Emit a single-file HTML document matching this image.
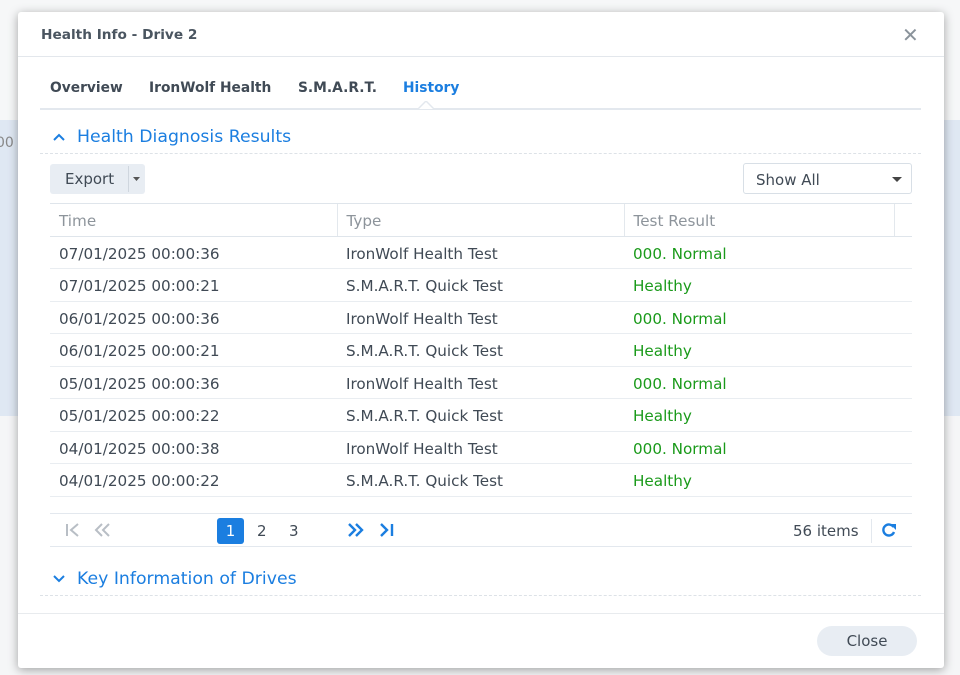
<!DOCTYPE html>
<html><head><meta charset="utf-8">
<style>
*{box-sizing:border-box;margin:0;padding:0}
body{width:960px;height:675px;overflow:hidden;background:#f4f5f7;font-family:"DejaVu Sans","Liberation Sans",sans-serif;position:relative;color:#404a55}
.bgtop{position:absolute;left:0;top:0;width:960px;height:120px;background:#f6f7f8}
.bgblue{position:absolute;left:0;top:120px;width:960px;height:296px;background:#dfe8f3}
.bgbot{position:absolute;left:0;top:416px;width:960px;height:259px;background:#f5f6f7}
.ghost{position:absolute;left:-4px;top:135px;font-size:14px;color:#888}
.dlg{position:absolute;left:18px;top:12px;width:926px;height:656px;background:#fff;border-radius:3px;box-shadow:0 2px 10px rgba(0,0,0,.35)}
.title{position:absolute;left:23px;top:15px;font-size:13.7px;font-weight:bold;color:#4a5560}
.x{position:absolute;left:884px;top:11px;font-size:20px;color:#8a939b;font-weight:bold}
.hline{position:absolute;left:0;top:44px;width:926px;height:1px;background:#e3e7ec}
.tabs{position:absolute;left:32px;top:68px;font-size:13.8px;font-weight:bold;color:#404a55}
.tabs span{position:absolute;white-space:nowrap}
.tabline{position:absolute;left:22px;top:96px;width:881px;height:1.5px;background:#e3e8ee}
.sec{position:absolute;font-size:17.3px;color:#1b7ee0;white-space:nowrap}
.dots{position:absolute;left:22px;width:881px;border-top:1px dashed #dde2e7}
.btn{position:absolute;left:32px;top:152px;width:95px;height:30px;background:#e8edf3;border-radius:3px;font-size:15px;color:#404a55}
.sel{position:absolute;left:725px;top:151px;width:169px;height:31px;border:1px solid #d8dfe6;border-radius:3px;font-size:15px;color:#404a55}
table{position:absolute;left:32px;top:191px;width:862px;border-collapse:collapse;font-size:15.2px}
td,th{height:32.5px;padding-left:9px;padding-top:3px;text-align:left;font-weight:normal;border-bottom:1px solid #e9edf1;white-space:nowrap}
th{color:#8d949b;border-top:1px solid #dfe5eb;border-bottom:1px solid #dfe5eb}
th+th{border-left:1px solid #e3e8ed}
.g{color:#1a9a1a}
.pager{position:absolute;left:32px;top:501px;width:862px;height:34px;border-top:1px solid #e3e8ee;border-bottom:1px solid #e3e8ee;font-size:15px}
.pager span{position:absolute;top:8px}
.foot{position:absolute;left:0;top:601px;width:926px;height:1px;background:#e8ebee}
.close{position:absolute;left:799px;top:614px;width:100px;height:30px;border-radius:15px;background:#e8edf3;font-size:15px;color:#404a55;text-align:center;line-height:30px}
</style></head><body>
<div class="bgtop"></div><div class="bgblue"></div><div class="bgbot"></div>
<div class="ghost">00</div>
<div class="dlg">
<div class="title">Health Info - Drive 2</div>
<div class="x">✕</div>
<div class="hline"></div>
<div class="tabs">
<span style="left:0">Overview</span>
<span style="left:99px">IronWolf Health</span>
<span style="left:248px">S.M.A.R.T.</span>
<span style="left:353px;color:#1b7ee0">History</span>
</div>
<div class="tabline"></div>
<svg style="position:absolute;left:400px;top:89px" width="16" height="9"><path d="M0 8 L8 0 L16 8" fill="#fff" stroke="#e3e8ee" stroke-width="1.5"/></svg>
<svg style="position:absolute;left:34px;top:120px" width="14" height="10"><path d="M2 8 L7 3 L12 8" fill="none" stroke="#1b7ee0" stroke-width="2"/></svg>
<div class="sec" style="left:59px;top:115px">Health Diagnosis Results</div>
<div class="dots" style="top:141px"></div>
<div class="btn"><span style="position:absolute;left:15px;top:6px">Export</span><span style="position:absolute;left:78px;top:2px;width:1px;height:26px;background:#cfd6de"></span><svg style="position:absolute;left:83px;top:13px" width="8" height="5"><path d="M0 0h7l-3.5 4z" fill="#555"/></svg></div>
<div class="sel"><span style="position:absolute;left:12px;top:7px">Show All</span><svg style="position:absolute;left:148px;top:13px" width="10" height="6"><path d="M0 0h10l-5 5z" fill="#444"/></svg></div>
<table>
<tr><th style="width:287px">Time</th><th style="width:287px">Type</th><th style="width:270px">Test Result</th><th></th></tr>
<tr><td>07/01/2025 00:00:36</td><td>IronWolf Health Test</td><td class="g" colspan="2">000. Normal</td></tr>
<tr><td>07/01/2025 00:00:21</td><td>S.M.A.R.T. Quick Test</td><td class="g" colspan="2">Healthy</td></tr>
<tr><td>06/01/2025 00:00:36</td><td>IronWolf Health Test</td><td class="g" colspan="2">000. Normal</td></tr>
<tr><td>06/01/2025 00:00:21</td><td>S.M.A.R.T. Quick Test</td><td class="g" colspan="2">Healthy</td></tr>
<tr><td>05/01/2025 00:00:36</td><td>IronWolf Health Test</td><td class="g" colspan="2">000. Normal</td></tr>
<tr><td>05/01/2025 00:00:22</td><td>S.M.A.R.T. Quick Test</td><td class="g" colspan="2">Healthy</td></tr>
<tr><td>04/01/2025 00:00:38</td><td>IronWolf Health Test</td><td class="g" colspan="2">000. Normal</td></tr>
<tr><td>04/01/2025 00:00:22</td><td>S.M.A.R.T. Quick Test</td><td class="g" colspan="2">Healthy</td></tr>
</table>
<div class="pager">
<svg style="position:absolute;left:15px;top:9px" width="16" height="14"><path d="M2 1v12M13 1L6 7l7 6" fill="none" stroke="#b8bec5" stroke-width="2"/></svg>
<svg style="position:absolute;left:44px;top:9px" width="18" height="14"><path d="M8 1L2 7l6 6M15 1L9 7l6 6" fill="none" stroke="#b8bec5" stroke-width="2"/></svg>
<div style="position:absolute;left:167px;top:4px;width:27px;height:26px;background:#1b7ee0;border-radius:3px;color:#fff;text-align:center;line-height:27px;font-size:15px">1</div>
<span style="left:207px">2</span><span style="left:239px">3</span>
<svg style="position:absolute;left:296px;top:9px" width="18" height="14"><path d="M3 1l6 6-6 6M10 1l6 6-6 6" fill="none" stroke="#1b7ee0" stroke-width="2.4"/></svg>
<svg style="position:absolute;left:328px;top:9px" width="18" height="14"><path d="M3 1l6 6-6 6M14 1v12" fill="none" stroke="#1b7ee0" stroke-width="2.4"/></svg>
<span style="left:743px;color:#404a55">56 items</span>
<div style="position:absolute;left:821px;top:5px;width:1px;height:24px;background:#e3e8ee"></div>
<svg style="position:absolute;left:831px;top:8px" width="16" height="16"><path d="M12.5 5A5.5 5.5 0 1 0 13 10" fill="none" stroke="#1b7ee0" stroke-width="2.4"/><path d="M9 2h6v6z" fill="#1b7ee0"/></svg>
</div>
<svg style="position:absolute;left:34px;top:562px" width="14" height="10"><path d="M2 2 L7 7 L12 2" fill="none" stroke="#1b7ee0" stroke-width="2"/></svg>
<div class="sec" style="left:59px;top:557px">Key Information of Drives</div>
<div class="dots" style="top:583px"></div>
<div class="foot"></div>
<div class="close">Close</div>
</div>
</body></html>
